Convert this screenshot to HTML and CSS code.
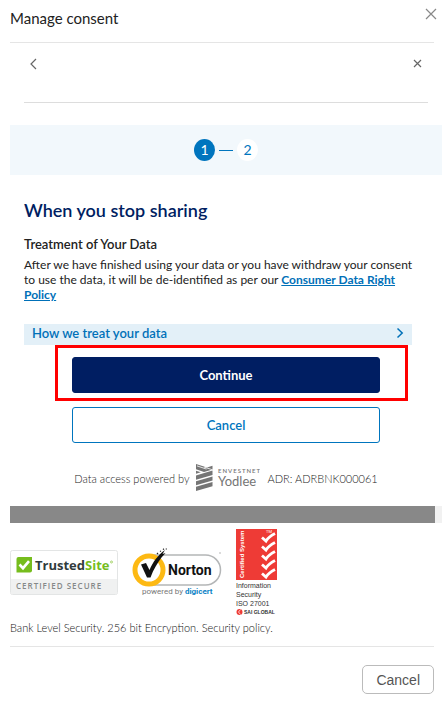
FILE: index.html
```html
<!DOCTYPE html>
<html lang="en">
<head>
    <meta charset="UTF-8">
    <meta name="viewport" content="width=device-width, initial-scale=1.0">
    <title>Manage consent</title>
    <link rel="stylesheet" href="styles.css">
</head>
<body>
<div class="modal">
    <div class="modal-header">
        <h1>Manage consent</h1>
        <button class="icon-btn close-btn" type="button" aria-label="Close">
            <svg width="12" height="12" viewBox="0 0 12 12"><path d="M1 1l10 10M11 1L1 11"/></svg>
        </button>
    </div>

    <div class="panel">
        <div class="panel-nav">
            <button class="icon-btn" type="button" aria-label="Back">
                <svg width="8" height="12" viewBox="0 0 8 12"><path d="M6 1L1 6l5 5"/></svg>
            </button>
            <button class="icon-btn" type="button" aria-label="Close panel">
                <svg width="9" height="9" viewBox="0 0 9 9"><path d="M1 1l7 7M8 1L1 8"/></svg>
            </button>
        </div>

        <div class="steps">
            <span class="step active">1</span>
            <span class="step-line"></span>
            <span class="step">2</span>
        </div>

        <div class="content">
            <h2>When you stop sharing</h2>
            <h3>Treatment of Your Data</h3>
            <p>After we have finished using your data or you have withdraw your consent to use the data, it will be de-identified as per our <a href="#">Consumer Data Right Policy</a></p>

            <button class="accordion" type="button">
                <span>How we treat your data</span>
                <svg width="8" height="12" viewBox="0 0 8 12"><path d="M1.500 1.500L6.200 6l-4.700 4.500"/></svg>
            </button>

            <div class="highlight">
                <button class="btn btn-primary" type="button">Continue</button>
            </div>
            <div class="secondary">
                <button class="btn btn-outline" type="button">Cancel</button>
            </div>

            <div class="powered">
                <span>Data access powered by</span>
                <svg class="yodlee" width="64" height="28" viewBox="0 0 64 28">
                    <g fill="#757575">
                        <path d="M0 0l11 3.500 5.500-1.700v3.600L8 8 0 5.200z"/>
                        <path d="M0 6.700l4.800 1.600L0 9.800z"/>
                        <path d="M0 11.400l16.500-4.800v4.300L0 15.700z"/>
                        <path d="M0 17.200l16.500-4.800v4.100L0 21.300z"/>
                        <path d="M0 22.800L16.500 18v4.200L0 27z"/>
                        <path d="M1 1.900l9.500 3.200M8 3l8.500 2.800" stroke="#fff" stroke-width=".8"/>
                        <text class="logo-envestnet" x="22" y="9">ENVESTNET</text>
                        <text class="logo-yodlee" x="22" y="22">Yodlee</text>
                    </g>
                </svg>
                <span>ADR: ADRBNK000061</span>
            </div>
        </div>

        <div class="scroll-track"><div class="scroll-thumb"></div></div>
    </div>

    <div class="badges">
        <svg width="108" height="46" viewBox="0 0 108 46" role="img" aria-label="TrustedSite certified secure">
            <rect x=".5" y=".5" width="107" height="44" rx="2" fill="#fff" stroke="#e3e5e5"/>
            <path d="M1 29h106v13.500a1.500 1.500 0 0 1-1.500 1.500h-103A1.500 1.500 0 0 1 1 42.500z" fill="#f0f1f1"/>
            <path d="M8.500 7H22v13.500a2 2 0 0 1-2 2H6.500V9a2 2 0 0 1 2-2z" fill="#76bd1d"/>
            <path d="M9.500 14.500l3.500 3.700 6-7" fill="none" stroke="#fff" stroke-width="2.600"/>
            <text class="trusted" x="25" y="20"><tspan fill="#313b3c">Trusted</tspan><tspan fill="#76bd1d">Site</tspan></text>
            <circle cx="101.500" cy="12" r="1" fill="none" stroke="#76bd1d" stroke-width=".6"/>
            <text class="certified" x="6" y="39">CERTIFIED SECURE</text>
        </svg>

        <svg width="90" height="50" viewBox="0 0 90 50" role="img" aria-label="Norton powered by digicert">
            <rect x="8" y="7" width="80.500" height="30" rx="15" fill="#fff" stroke="#b4b6b7" stroke-width="1.500"/>
            <circle cx="17" cy="22" r="14" fill="#fff" stroke="#fdb913" stroke-width="5"/>
            <path d="M9 16.500l5-1.500 3.500 7C21 14 25.500 7.500 33 2l-2.500 4 3-1-4 4.500C25.500 15 21.500 21 18.500 29.500H15z" fill="#111"/>
            <path d="M25 5l1 1M28 3l1 .6M31 .8l1 .8M34.300.5v1" stroke="#222" stroke-width="1.200"/>
            <text class="norton" x="36" y="27">Norton</text>
            <text class="norton-by" x="10" y="46"><tspan fill="#777">powered by </tspan><tspan class="digicert">digicert</tspan></text>
            <path d="M87 5h2" stroke="#999" stroke-width=".7"/>
        </svg>

        <svg width="42" height="88" viewBox="0 0 42 88" role="img" aria-label="Certified System, Information Security ISO 27001">
            <rect width="41" height="51" fill="#ee3b36"/>
            <text class="sai-side" transform="translate(8 49) rotate(-90)">Certified System</text>
            <g fill="none" stroke="#fff" stroke-width="2.800">
                <path d="M26 8.500l4 3.500c2.500-4 5-5.500 9-7.500"/>
                <path d="M26 17.500l4 3.500c2.500-4 5-5.500 9-7.500"/>
                <path d="M26 26.500l4 3.500c2.500-4 5-5.500 9-7.500"/>
                <path d="M26 35.500l4 3.500c2.500-4 5-5.500 9-7.500"/>
                <path d="M26 44.500l4 3.500c2.500-4 5-5.500 9-7.500"/>
            </g>
            <text class="sai-tm" x="30" y="4">TM</text>
            <g class="sai-text">
                <text x="0" y="59">Information</text>
                <text x="0" y="68">Security</text>
                <text x="0" y="77">ISO 27001</text>
            </g>
            <circle cx="3.500" cy="83" r="3" fill="#ee3b36"/>
            <path d="M4.500 80.500l-2 2.500 2 2.500" fill="none" stroke="#fff" stroke-width=".7"/>
            <text class="sai-global" x="8" y="85">SAI GLOBAL</text>
        </svg>
    </div>

    <div class="security">Bank Level Security. 256 bit Encryption. Security policy.</div>

    <div class="modal-footer">
        <button class="footer-btn" type="button">Cancel</button>
    </div>
</div>
</body>
</html>
```
FILE: styles.css
```css
* {
    box-sizing: border-box;
}

body {
    margin: 0;
    background: #fff;
    font-family: Lato, "Liberation Sans", sans-serif;
    color: #222;
}

h1, h2, h3, p {
    margin: 0;
}

button {
    font-family: inherit;
    cursor: pointer;
}

svg {
    display: block;
    flex: none;
}

.modal {
    padding: 0 6px 0 10px;
}

.modal-header {
    display: flex;
    justify-content: space-between;
    align-items: flex-start;
    height: 43px;
    padding-top: 8px;
    margin-right: 8px;
    border-bottom: 1px solid #e5e5e5;
}

.modal-header h1 {
    font-size: 15px;
    line-height: 20px;
    font-weight: 400;
}

.icon-btn {
    padding: 0;
    border: none;
    background: none;
}

.icon-btn path {
    fill: none;
    stroke: #666;
    stroke-width: 1.2;
}

.close-btn {
    margin-right: -3px;
}

.close-btn path {
    stroke: #888;
}

.panel-nav {
    display: flex;
    justify-content: space-between;
    align-items: center;
    height: 60px;
    padding: 0 6px 18px;
    margin: 0 14px;
    border-bottom: 1px solid #ddd;
}

.steps {
    display: flex;
    justify-content: center;
    align-items: center;
    gap: 4px;
    height: 50px;
    margin-top: 22px;
    background: #f2f8fc;
}

.step {
    width: 21px;
    height: 22px;
    border-radius: 50%;
    background: #fff;
    color: #0075be;
    font-size: 14px;
    line-height: 21px;
    text-align: center;
}

.step.active {
    background: #0075be;
    color: #fff;
}

.step-line {
    width: 14px;
    height: 1px;
    background: #0075be;
}

.content {
    padding: 23px 14px 14px;
}

.content h2 {
    font-size: 18px;
    line-height: 24px;
    font-weight: 600;
    color: #001e62;
}

.content h3 {
    margin-top: 14px;
    font-size: 13px;
    line-height: 16px;
    font-weight: 600;
}

.content p {
    margin-top: 5px;
    padding-right: 8px;
    font-size: 12px;
    line-height: 15px;
}

.content a {
    color: #0070b8;
    font-weight: 700;
}

.accordion {
    display: flex;
    justify-content: space-between;
    align-items: center;
    width: calc(100% - 16px);
    height: 21px;
    margin-top: 22px;
    padding: 0 8px 3px;
    border: none;
    background: #e3f0f8;
    color: #0070b8;
    font-size: 13px;
    font-weight: 600;
}

.accordion path {
    fill: none;
    stroke: #0070b8;
    stroke-width: 1.5;
}

.highlight {
    margin: 0 20px 0 31px;
    padding: 9px 25px 5px 14px;
    border: 3px solid #f00;
}

.secondary {
    padding: 6px 48px 0;
}

.btn {
    display: block;
    width: 100%;
    height: 36px;
    padding: 0;
    border: 1px solid #0075be;
    border-radius: 3px;
    font-size: 13px;
    font-weight: 700;
}

.btn-primary {
    border-color: #001e62;
    background: #001e62;
    color: #fff;
}

.btn-outline {
    background: #fff;
    color: #0075be;
    font-weight: 600;
}

.powered {
    display: flex;
    justify-content: center;
    align-items: center;
    gap: 7px;
    margin-top: 21px;
    font-size: 11px;
    font-weight: 300;
    color: #222;
}

.logo-envestnet {
    font-size: 6px;
    font-weight: 600;
    letter-spacing: 1px;
}

.logo-yodlee {
    font-size: 13px;
    font-weight: 400;
}

.scroll-track {
    height: 17px;
    background: #f1f1f1;
}

.scroll-thumb {
    height: 100%;
    margin-right: 7px;
    background: #888;
}

.badges {
    display: flex;
    align-items: center;
    gap: 14px;
    margin-top: 6px;
}

.trusted {
    font-family: "Open Sans", sans-serif;
    font-size: 13px;
    font-weight: 700;
}

.certified {
    font-family: "Open Sans", sans-serif;
    font-size: 8px;
    font-weight: 600;
    letter-spacing: 1px;
    fill: #858989;
}

.norton {
    font-family: Roboto, sans-serif;
    font-size: 14px;
    font-weight: 700;
    fill: #111;
}

.norton-by {
    font-family: Roboto, sans-serif;
    font-size: 8px;
}

.digicert {
    font-weight: 700;
    fill: #0b83c6;
}

.sai-side {
    font-family: "Liberation Sans", sans-serif;
    font-size: 6px;
    font-weight: 700;
    fill: #fff;
}

.sai-tm {
    font-family: Roboto, sans-serif;
    font-size: 4px;
    fill: #fff;
}

.sai-text {
    font-family: "Liberation Sans", sans-serif;
    font-size: 7px;
    fill: #333;
}

.sai-global {
    font-family: "Liberation Sans", sans-serif;
    font-size: 5px;
    font-weight: 700;
    fill: #333;
}

.security {
    margin-top: 3px;
    font-size: 11px;
    font-weight: 300;
    line-height: 16px;
    color: #111;
}

.modal-footer {
    display: flex;
    justify-content: flex-end;
    margin: 10px 8px 0 0;
    padding-top: 18px;
    border-top: 1px solid #e5e5e5;
}

.footer-btn {
    height: 29px;
    padding: 0 13px;
    border: 1px solid #bbb;
    border-radius: 5px;
    background: #fff;
    color: #555;
    font-family: "Liberation Sans", Arial, sans-serif;
    font-size: 14px;
}
```
